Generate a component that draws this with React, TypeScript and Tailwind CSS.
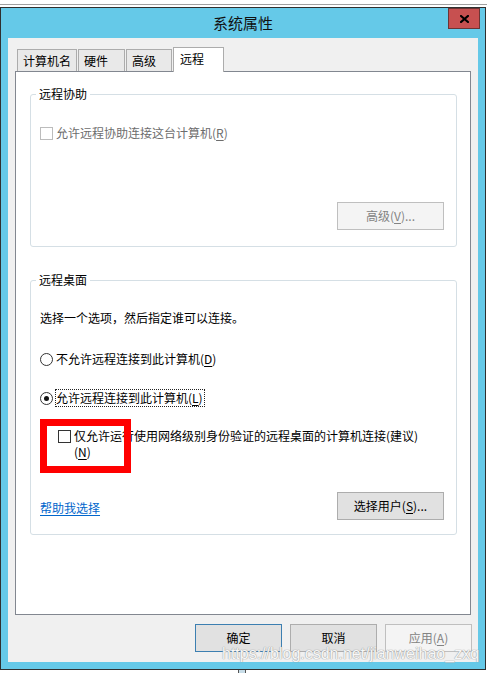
const cjk = "font-['Microsoft_YaHei','Noto_Sans_CJK_SC',sans-serif]";

function Box({ disabled }: { disabled?: boolean }) {
  return (
    <span
      className={
        'block h-[13px] w-[13px] shrink-0 border bg-white ' +
        (disabled ? 'border-[#bcbcbc]' : 'border-[#333333]')
      }
    />
  );
}

function Radio({ checked }: { checked?: boolean }) {
  return (
    <span className="flex h-[13px] w-[13px] shrink-0 items-center justify-center rounded-full border border-[#333333] bg-white">
      {checked && <span className="h-[5px] w-[5px] rounded-full bg-[#111111]" />}
    </span>
  );
}

function Btn({
  children,
  disabled,
  primary,
  className = '',
}: {
  children: React.ReactNode;
  disabled?: boolean;
  primary?: boolean;
  className?: string;
}) {
  let look = 'border-[#adadad] bg-[#e1e1e1] text-black';
  if (disabled) look = 'border-[#bfbfbf] bg-[#f4f4f4] text-[#838383]';
  if (primary) look = 'border-[#3c7fb1] bg-[#e1e1e1] text-black';
  return (
    <button className={'flex h-[28px] items-center justify-center border text-[12px] leading-[16px] ' + look + ' ' + className}>
      {children}
    </button>
  );
}

function Group({ title, children, className = '' }: { title: string; children: React.ReactNode; className?: string }) {
  return (
    <fieldset className={'ml-[14px] mr-[13px] rounded-[3px] border border-[#d5dfe5] pl-[9px] pr-[12px] ' + className}>
      <legend className="ml-[-4px] px-[3px] text-[12px] leading-[16px] text-black">{title}</legend>
      {children}
    </fieldset>
  );
}

export default function App() {
  return (
    <div className={'relative h-[673px] w-[487px] overflow-hidden bg-white text-[12px] leading-[16px] ' + cjk}>
      <div className="h-[4px]" />
      <div className="h-px bg-[#a0a0a0]" />
      <div className="h-[2px]" />

      <div className="flex h-[663px] w-[486px] flex-col border border-[#2f2f2f] bg-[#65c9e8]">
        {/* title bar */}
        <div className="relative flex h-[30px] items-center justify-center">
          <span className="text-[15px] leading-[20px] text-[#111111]">系统属性</span>
          <button className="absolute right-[5px] top-0 flex h-[21px] w-[32px] items-center justify-center border border-[#6b3434] bg-[#c75050]">
            <svg width="9" height="8" viewBox="0 0 9 8">
              <path d="M1 1 L8 7 M8 1 L1 7" stroke="#000" strokeWidth="2.2" strokeLinecap="square" />
            </svg>
          </button>
        </div>

        {/* client area */}
        <div className="mx-[7px] flex h-[624px] flex-col bg-[#f0f0f0] pt-[9px]">
          {/* tabs */}
          <div className="flex h-[24px] items-end pl-[9px] text-black">
            <div className="flex h-[22px] w-[60px] items-center border border-b-0 border-[#acacac] bg-[#e9e9e9] pl-[5px]">计算机名</div>
            <div className="ml-px flex h-[22px] w-[47px] items-center border border-b-0 border-[#acacac] bg-[#e9e9e9] pl-[5px]">硬件</div>
            <div className="ml-px flex h-[22px] w-[46px] items-center border border-b-0 border-[#acacac] bg-[#e9e9e9] pl-[5px]">高级</div>
            <div className="relative z-10 -mb-px ml-px flex h-[25px] w-[51px] items-start border border-b-0 border-[#acacac] bg-white pl-[6px] pt-[3px]">
              远程
            </div>
          </div>

          {/* tab page */}
          <div className="mx-[7px] flex h-[544px] flex-col border border-[#828790] bg-white">
            <Group title="远程协助" className="mt-[14px] pb-[16px]">
              <div className="mt-[23px] flex h-[16px] items-center gap-[3px] text-[#6d6d6d]">
                <Box disabled />
                <span>
                  允许远程协助连接这台计算机(<u className="underline-offset-2">R</u>)
                </span>
              </div>
              <div className="mt-[61px] flex justify-end">
                <Btn disabled className="w-[107px]">
                  高级(<u className="underline-offset-2">V</u>)...
                </Btn>
              </div>
            </Group>

            <Group title="远程桌面" className="mt-[25px] pb-[14px]">
              <p className="mt-[22px] text-black">选择一个选项，然后指定谁可以连接。</p>

              <div className="mt-[25px] flex h-[16px] items-center gap-[3px] text-black">
                <Radio />
                <span>
                  不允许远程连接到此计算机(<u className="underline-offset-2">D</u>)
                </span>
              </div>

              <div className="mt-[22px] flex h-[18px] items-center gap-[2px] text-black">
                <Radio checked />
                <span className="border border-dotted border-[#222222] pr-px">
                  允许远程连接到此计算机(<u className="underline-offset-2">L</u>)
                </span>
              </div>

              <div className="ml-[18px] mt-[21px] flex items-start gap-[3px] text-black">
                <div className="flex h-[16px] items-center">
                  <Box />
                </div>
                <p>
                  仅允许运行使用网络级别身份验证的远程桌面的计算机连接(建议)
                  <br />(<u className="underline-offset-2">N</u>)
                </p>
              </div>

              <div className="mt-[32px] flex items-center justify-between">
                <a className="mt-[3px] text-[#0066cc] underline underline-offset-2">帮助我选择</a>
                <Btn className="w-[107px]">
                  选择用户(<u className="underline-offset-2">S</u>)...
                </Btn>
              </div>
            </Group>
          </div>

          {/* dialog buttons */}
          <div className="mt-[9px] flex justify-end gap-[8px] pr-[6px]">
            <Btn primary className="w-[87px]">确定</Btn>
            <Btn className="w-[87px]">取消</Btn>
            <Btn disabled className="w-[87px]">
              应用(<u className="underline-offset-2">A</u>)
            </Btn>
          </div>
        </div>
      </div>

      <div className="ml-[238px] h-[4px] w-[8px] border-x border-[#555555] bg-[#c8dde8]" />

      {/* annotation marker */}
      <div className="absolute left-[40px] top-[419px] h-[54px] w-[91px] border-[7px] border-[#ff0000]" />

      {/* watermark */}
      <div className="absolute left-[222px] top-[645px] font-['Liberation_Sans',sans-serif] text-[16px] leading-[18px] text-[#f7f7f7] [text-shadow:0_0_1px_#9a9a9a,0_0_1px_#9a9a9a]">
        https://blog.csdn.net/jianweihao_zxq
      </div>
    </div>
  );
}
